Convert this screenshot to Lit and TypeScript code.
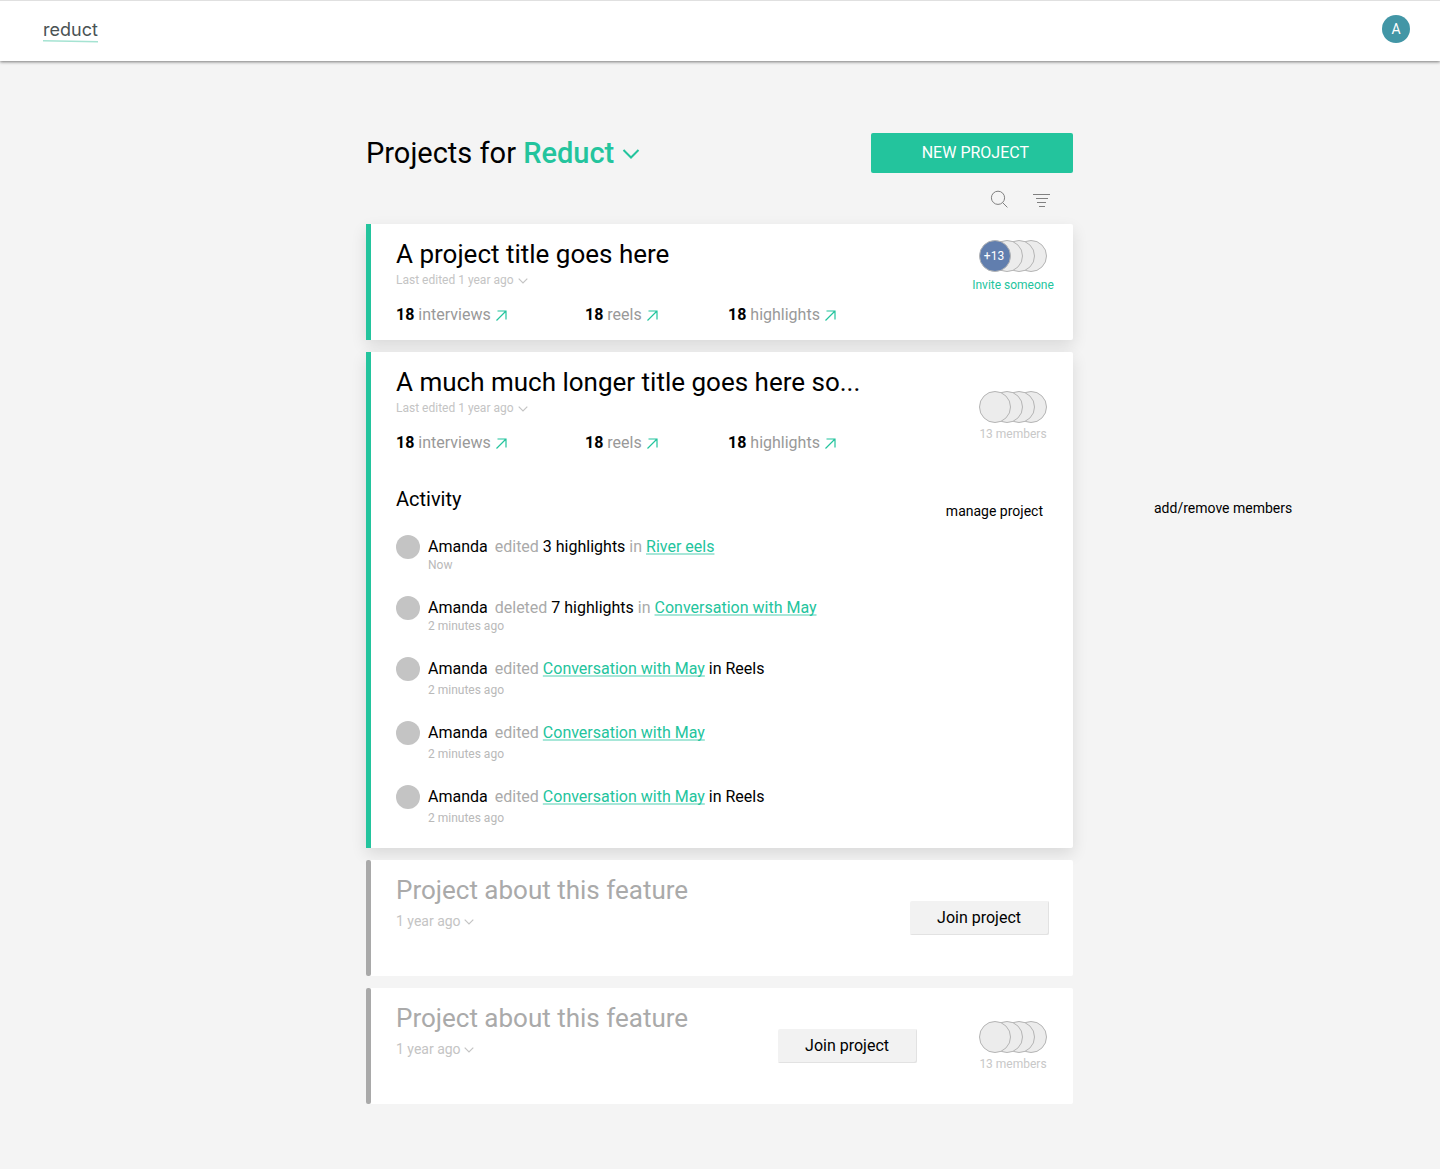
import { LitElement, html, css, svg, nothing } from "lit";
import { customElement, property } from "lit/decorators.js";
import { classMap } from "lit/directives/class-map.js";

interface Part {
  kind: "verb" | "text" | "link";
  text: string;
}

interface Activity {
  who: string;
  parts: Part[];
  when: string;
  roomy?: boolean;
}

interface Project {
  title: string;
  joined: boolean;
  edited: string;
  members?: { label: string; extra?: string; invite?: boolean; lowered?: boolean };
  activity?: Activity[];
}

const verb = (text: string): Part => ({ kind: "verb", text });
const plain = (text: string): Part => ({ kind: "text", text });
const link = (text: string): Part => ({ kind: "link", text });

const ACTIVITY: Activity[] = [
  { who: "Amanda", parts: [verb("edited"), plain("3 highlights"), verb("in"), link("River eels")], when: "Now" },
  { who: "Amanda", parts: [verb("deleted"), plain("7 highlights"), verb("in"), link("Conversation with May")], when: "2 minutes ago" },
  { who: "Amanda", parts: [verb("edited"), link("Conversation with May"), plain("in Reels")], when: "2 minutes ago", roomy: true },
  { who: "Amanda", parts: [verb("edited"), link("Conversation with May")], when: "2 minutes ago", roomy: true },
  { who: "Amanda", parts: [verb("edited"), link("Conversation with May"), plain("in Reels")], when: "2 minutes ago", roomy: true },
];

const PROJECTS: Project[] = [
  {
    title: "A project title goes here",
    joined: true,
    edited: "Last edited 1 year ago",
    members: { label: "Invite someone", extra: "+13", invite: true },
  },
  {
    title: "A much much longer title goes here so...",
    joined: true,
    edited: "Last edited 1 year ago",
    members: { label: "13 members", lowered: true },
    activity: ACTIVITY,
  },
  { title: "Project about this feature", joined: false, edited: "1 year ago" },
  { title: "Project about this feature", joined: false, edited: "1 year ago", members: { label: "13 members" } },
];

const chevron = html`<svg class="chevron" width="10" height="6" viewBox="0 0 10 6" aria-hidden="true">
  <path d="M0.7 0.7 L5 5 L9.3 0.7" fill="none" stroke="currentColor" stroke-width="1.2" />
</svg>`;

const arrow = html`<svg class="arrow" width="11" height="11" viewBox="0 0 11 11" aria-hidden="true">
  <path d="M0.5 10.5 L10 1 M1.5 1 H10 V9.5" fill="none" stroke="currentColor" stroke-width="1.2" />
</svg>`;

@customElement("member-stack")
export class MemberStack extends LitElement {
  @property() label = "";
  @property() extra = "";
  @property({ type: Boolean }) invite = false;

  static styles = css`
    :host { display: flex; flex-direction: column; align-items: center; width: 82px; }
    .faces { display: flex; }
    .face {
      box-sizing: border-box; width: 32px; height: 32px; border-radius: 50%;
      border: 1px solid #b4b4b4; background: #ececec; position: relative;
      display: flex; align-items: center; justify-content: center;
      font-size: 12px; color: #fff;
    }
    .face + .face { margin-left: -20px; }
    .face:nth-child(1) { z-index: 4; }
    .face:nth-child(2) { z-index: 3; }
    .face:nth-child(3) { z-index: 2; }
    .face:nth-child(4) { z-index: 1; }
    .face.count { background: #617eae; padding-right: 2px; }
    .label { margin-top: 4px; font-size: 12px; line-height: 14px; color: #c8c8c8; white-space: nowrap; }
    .invite { margin-top: 6px; color: #23c49d; text-decoration: none; }
  `;

  render() {
    return html`
      <div class="faces">
        ${[0, 1, 2, 3].map(
          (i) => html`<span class=${classMap({ face: true, count: i === 0 && !!this.extra })}>${i === 0 ? this.extra : nothing}</span>`
        )}
      </div>
      ${this.invite
        ? html`<a class="label invite" href="#invite">${this.label}</a>`
        : html`<span class="label">${this.label}</span>`}
    `;
  }
}

@customElement("project-card")
export class ProjectCard extends LitElement {
  @property({ attribute: false }) project!: Project;

  static styles = css`
    :host { display: block; min-width: 0; }
    button { font: inherit; color: inherit; background: none; border: 0; margin: 0; padding: 0; cursor: pointer; }
    .card {
      position: relative; background: #fff; border-left: 5px solid #23c49d;
      border-radius: 0 2px 2px 0; box-shadow: 0 6px 16px rgba(0, 0, 0, 0.11);
    }
    .card.open { border-left: 0; border-radius: 2px; box-shadow: none; display: flex; }
    .bar { flex: none; width: 5px; border-radius: 2px; background: #a9a9a9; }
    .summary { flex: 1; display: flex; box-sizing: border-box; min-height: 116px; padding: 0 19px 0 25px; }
    .info { flex: 1; min-width: 0; padding: 15px 0; }
    .title {
      margin: 0 0 4px; font-size: 26px; line-height: 30px; font-weight: 400; color: #000;
      overflow: hidden; text-overflow: ellipsis; white-space: nowrap;
    }
    .open .title { color: #aaa; margin-bottom: 8px; }
    .edited { display: flex; align-items: center; gap: 4px; font-size: 12px; line-height: 14px; color: #c4c4c4; white-space: nowrap; }
    .open .edited { font-size: 14px; line-height: 16px; gap: 3px; }
    .chevron { margin-top: 2px; }
    .stats { display: grid; grid-template-columns: 189px 143px auto; margin: 18px 0 0; padding: 0; list-style: none; }
    .stat { font-size: 16px; line-height: 20px; color: #999; text-decoration: none; white-space: nowrap; }
    .num { font-weight: 700; color: #000; }
    .arrow { color: #23c49d; margin-left: 1px; vertical-align: -1px; }
    .members { margin-top: 16px; }
    .members.lowered { margin-top: 39px; }
    .open .members { margin-top: 0; align-self: center; margin-left: 55px; }
    .join {
      align-self: center; box-sizing: border-box; height: 34px; padding: 0 28px 0 27px; border-radius: 2px;
      background: #f2f2f2; color: #000; font-size: 16px; line-height: 20px; white-space: nowrap;
      box-shadow: inset -1px -1px 0 #e2e2e2;
    }
    .join.last { margin-right: 5px; }
    .activity { padding: 19px 30px 24px 25px; }
    .top { display: flex; justify-content: space-between; height: 32px; }
    .heading { margin: 0; font-size: 20px; line-height: 24px; font-weight: 400; color: #000; }
    .manage { align-self: flex-end; font-size: 14px; line-height: 16px; color: #000; }
    .feed { display: flex; flex-direction: column; gap: 25px; margin: 16px 0 0; padding: 0; list-style: none; }
    .entry { display: flex; gap: 8px; }
    .avatar { flex: none; width: 24px; height: 24px; border-radius: 50%; background: #c4c4c4; }
    .line { margin: 0; font-size: 16px; line-height: 24px; color: #000; }
    .who { margin-right: 7px; }
    .verb { color: #aaa; }
    .link {
      color: #23c49d; text-decoration: underline; text-decoration-color: #a7e7d8;
      text-decoration-thickness: 2px; text-underline-offset: 1px; text-decoration-skip-ink: none;
    }
    .when { display: block; font-size: 12px; line-height: 12px; color: #b9b9b9; }
    .when.roomy { margin-top: 3px; }
  `;

  private part(p: Part) {
    if (p.kind === "link") return html`<a class="link" href="#item">${p.text}</a> `;
    return html`<span class=${p.kind}>${p.text}</span> `;
  }

  private entry(a: Activity) {
    return html`<li class="entry">
      <span class="avatar"></span>
      <div>
        <p class="line"><span class="who">${a.who}</span>${a.parts.map((p) => this.part(p))}</p>
        <span class=${classMap({ when: true, roomy: !!a.roomy })}>${a.when}</span>
      </div>
    </li>`;
  }

  render() {
    const p = this.project;
    const m = p.members;
    return html`
      <article class=${classMap({ card: true, open: !p.joined })}>
        ${p.joined ? nothing : html`<span class="bar"></span>`}
        <div class="summary">
          <div class="info">
            <h2 class="title">${p.title}</h2>
            <button class="edited" type="button">${p.edited}${chevron}</button>
            ${p.joined
              ? html`<ul class="stats">
                  ${["interviews", "reels", "highlights"].map(
                    (s) => html`<li><a class="stat" href="#${s}"><span class="num">18</span> ${s} ${arrow}</a></li>`
                  )}
                </ul>`
              : nothing}
          </div>
          ${p.joined ? nothing : html`<button class=${classMap({ join: true, last: !m })} type="button">Join project</button>`}
          ${m
            ? html`<member-stack
                class=${classMap({ members: true, lowered: !!m.lowered })}
                .label=${m.label} .extra=${m.extra ?? ""} .invite=${!!m.invite}
              ></member-stack>`
            : nothing}
        </div>
        ${p.activity
          ? html`<section class="activity">
              <div class="top">
                <h3 class="heading">Activity</h3>
                <button class="manage" type="button">manage project</button>
              </div>
              <ul class="feed">${p.activity.map((a) => this.entry(a))}</ul>
            </section>`
          : nothing}
      </article>
    `;
  }
}

@customElement("app-root")
export class AppRoot extends LitElement {
  static styles = css`
    :host { display: block; min-height: 100vh; background: #f4f4f4; font-family: Roboto, "Liberation Sans", sans-serif; color: #000; }
    button { font: inherit; color: inherit; background: none; border: 0; margin: 0; padding: 0; cursor: pointer; }
    .bar {
      position: relative; box-sizing: border-box; height: 61px; display: flex; align-items: flex-start; justify-content: space-between;
      padding: 14px 30px 0 43px; background: #fff; border-top: 1px solid #e0e0e0; box-shadow: 0 1px 3px rgba(0, 0, 0, 0.5);
    }
    .logo { display: flex; flex-direction: column; padding-top: 5px; color: #4a5354; text-decoration: none; font-family: Inter, Roboto, sans-serif; font-size: 18px; line-height: 20px; }
    .logo svg { display: block; }
    .me {
      width: 28px; height: 28px; border-radius: 50%; background: #4296a6; color: #fff;
      font-size: 14px; line-height: 28px; text-align: center;
    }
    .main { display: grid; grid-template-columns: minmax(0, 1fr) minmax(0, 707px) minmax(0, 1fr); row-gap: 12px; padding: 72px 1px 64px 0; }
    .main > * { grid-column: 2; }
    .row { display: flex; align-items: center; justify-content: space-between; height: 40px; }
    .name { margin: 0; font-size: 29px; line-height: 40px; font-weight: 400; white-space: nowrap; }
    .team { color: #23c49d; font-weight: 500; }
    .down { margin-left: 8px; vertical-align: 2px; }
    .new {
      height: 40px; padding: 0 44px 0 51px; border-radius: 2px; background: #23c49d; color: #fff;
      font-size: 16px; line-height: 20px; white-space: nowrap;
    }
    .tools { display: flex; justify-content: flex-end; gap: 19px; margin-top: 15px; padding-right: 19px; }
    .tool { width: 24px; height: 24px; color: #808080; }
    .tool svg { display: block; }
    .main > .side { grid-column: 3; padding: 148px 0 0 81px; }
    .note { display: block; font-size: 14px; line-height: 16px; white-space: nowrap; }
  `;

  private icon(shape: unknown) {
    return html`<svg width="24" height="24" viewBox="0 0 24 24" fill="none" stroke="currentColor" stroke-width="1" aria-hidden="true">${shape}</svg>`;
  }

  render() {
    const [first, second, ...rest] = PROJECTS;
    return html`
      <header class="bar">
        <a class="logo" href="#home">reduct
          <svg width="55" height="3" viewBox="0 0 55 3" aria-hidden="true"><path d="M0 0 L55 1 V2.4 L0 1.5 Z" fill="#a5e3d2" /></svg>
        </a>
        <button class="me" type="button" aria-label="Account">A</button>
      </header>
      <main class="main">
        <div>
          <div class="row">
            <h1 class="name">Projects for <button class="team" type="button">Reduct<svg class="down" width="18" height="12" viewBox="0 0 18 12" aria-hidden="true"><path d="M1.5 1 L9 8.5 L16.5 1" fill="none" stroke="currentColor" stroke-width="2" /></svg></button></h1>
            <button class="new" type="button">NEW PROJECT</button>
          </div>
          <div class="tools">
            <button class="tool" type="button" aria-label="Search">
              ${this.icon(svg`<circle cx="11" cy="9.8" r="6.6" /><path d="M15.6 14.6 L20.4 19.4" />`)}
            </button>
            <button class="tool" type="button" aria-label="Filter">
              ${this.icon(svg`<path d="M3 6.5 H20 M6 10.5 H18 M7 14.5 H16 M9 18.5 H15" />`)}
            </button>
          </div>
        </div>
        <project-card .project=${first}></project-card>
        <project-card .project=${second}></project-card>
        <aside class="side"><button class="note" type="button">add/remove members</button></aside>
        ${rest.map((p) => html`<project-card .project=${p}></project-card>`)}
      </main>
    `;
  }
}
